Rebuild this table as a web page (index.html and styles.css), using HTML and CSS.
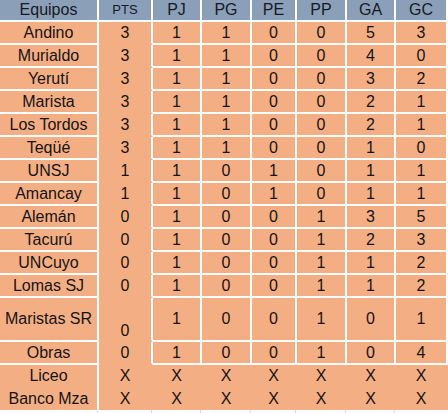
FILE: index.html
```html
<!DOCTYPE html>
<html lang="es">
<head>
<meta charset="utf-8">
<title>Tabla de posiciones</title>
<link rel="stylesheet" href="styles.css">
</head>
<body>
<div class="sheet">
  <div class="row head">
    <div class="c">Equipos</div><div class="c pts small">PTS</div><div class="c">PJ</div><div class="c">PG</div><div class="c">PE</div><div class="c">PP</div><div class="c">GA</div><div class="c">GC</div>
  </div>
  <div class="row">
    <div class="c">Andino</div><div class="c pts">3</div><div class="c">1</div><div class="c">1</div><div class="c">0</div><div class="c">0</div><div class="c">5</div><div class="c">3</div>
  </div>
  <div class="row">
    <div class="c">Murialdo</div><div class="c pts">3</div><div class="c">1</div><div class="c">1</div><div class="c">0</div><div class="c">0</div><div class="c">4</div><div class="c">0</div>
  </div>
  <div class="row">
    <div class="c">Yerutí</div><div class="c pts">3</div><div class="c">1</div><div class="c">1</div><div class="c">0</div><div class="c">0</div><div class="c">3</div><div class="c">2</div>
  </div>
  <div class="row">
    <div class="c">Marista</div><div class="c pts">3</div><div class="c">1</div><div class="c">1</div><div class="c">0</div><div class="c">0</div><div class="c">2</div><div class="c">1</div>
  </div>
  <div class="row">
    <div class="c">Los Tordos</div><div class="c pts">3</div><div class="c">1</div><div class="c">1</div><div class="c">0</div><div class="c">0</div><div class="c">2</div><div class="c">1</div>
  </div>
  <div class="row">
    <div class="c">Teqüé</div><div class="c pts">3</div><div class="c">1</div><div class="c">1</div><div class="c">0</div><div class="c">0</div><div class="c">1</div><div class="c">0</div>
  </div>
  <div class="row">
    <div class="c">UNSJ</div><div class="c pts">1</div><div class="c">1</div><div class="c">0</div><div class="c">1</div><div class="c">0</div><div class="c">1</div><div class="c">1</div>
  </div>
  <div class="row">
    <div class="c">Amancay</div><div class="c pts">1</div><div class="c">1</div><div class="c">0</div><div class="c">1</div><div class="c">0</div><div class="c">1</div><div class="c">1</div>
  </div>
  <div class="row">
    <div class="c">Alemán</div><div class="c pts">0</div><div class="c">1</div><div class="c">0</div><div class="c">0</div><div class="c">1</div><div class="c">3</div><div class="c">5</div>
  </div>
  <div class="row">
    <div class="c">Tacurú</div><div class="c pts">0</div><div class="c">1</div><div class="c">0</div><div class="c">0</div><div class="c">1</div><div class="c">2</div><div class="c">3</div>
  </div>
  <div class="row">
    <div class="c">UNCuyo</div><div class="c pts">0</div><div class="c">1</div><div class="c">0</div><div class="c">0</div><div class="c">1</div><div class="c">1</div><div class="c">2</div>
  </div>
  <div class="row">
    <div class="c">Lomas SJ</div><div class="c pts">0</div><div class="c">1</div><div class="c">0</div><div class="c">0</div><div class="c">1</div><div class="c">1</div><div class="c">2</div>
  </div>
  <div class="row tall">
    <div class="c">Maristas SR</div><div class="c pts bottom">0</div><div class="c">1</div><div class="c">0</div><div class="c">0</div><div class="c">1</div><div class="c">0</div><div class="c">1</div>
  </div>
  <div class="row">
    <div class="c">Obras</div><div class="c pts">0</div><div class="c">1</div><div class="c">0</div><div class="c">0</div><div class="c">1</div><div class="c">0</div><div class="c">4</div>
  </div>
  <div class="row open first">
    <div class="c">Liceo</div><div class="c">X</div><div class="c">X</div><div class="c">X</div><div class="c">X</div><div class="c">X</div><div class="c">X</div><div class="c">X</div>
  </div>
  <div class="row open last">
    <div class="c">Banco Mza</div><div class="c">X</div><div class="c">X</div><div class="c">X</div><div class="c">X</div><div class="c">X</div><div class="c">X</div><div class="c">X</div>
  </div>
  <div class="row ticks">
    <div class="t"></div><div class="t"></div><div class="t"></div><div class="t"></div><div class="t"></div><div class="t"></div><div class="t"></div><div class="t end"></div>
  </div>
</div>
</body>
</html>
```

FILE: styles.css
```css
html, body {
  margin: 0;
  padding: 0;
  background: #ffffff;
}

.sheet {
  width: 448px;
  font-family: "Liberation Sans", Arial, sans-serif;
  font-size: 16px;
  color: #141414;
}

.row {
  display: grid;
  grid-template-columns: 99px 54px 49px 50px 45px 50px 49px 52px;
  height: 23px;
}

.c {
  box-sizing: border-box;
  display: flex;
  align-items: center;
  justify-content: center;
  background: #f4ae84;
  border-right: 2px solid #ffffff;
  border-bottom: 2px solid #ffffff;
  line-height: 18px;
  white-space: nowrap;
  overflow: hidden;
}

.head {
  height: 22px;
}

.head .c {
  background: #8c9fb8;
  color: #151a22;
}

.head .small {
  font-size: 13px;
}

.pts {
  border-bottom-color: transparent;
}

.head .pts {
  border-bottom-color: #ffffff;
}

.tall {
  height: 44px;
}

.bottom {
  align-items: flex-end;
}

.open .c {
  border-bottom: 0;
  border-right-color: transparent;
}

.open .c:first-child {
  border-right-color: #ffffff;
}

.open.first {
  height: 22px;
}

.open.last {
  height: 23px;
}

.ticks {
  height: 3px;
}

.t {
  box-sizing: border-box;
  border-right: 1px solid #dadada;
  margin-right: 1px;
}

.t.end {
  border-right: 0;
}
```
